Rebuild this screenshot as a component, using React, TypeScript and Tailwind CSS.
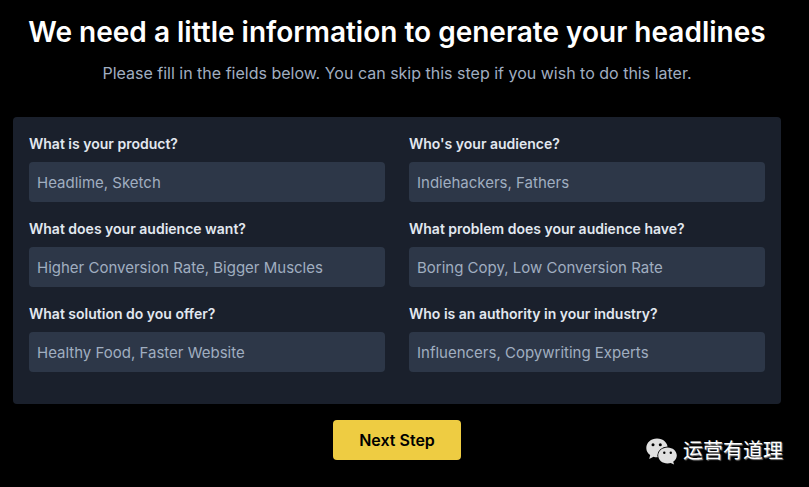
import React from 'react';

interface Field {
  id: string;
  label: string;
  placeholder: string;
}

const fields: Field[] = [
  { id: 'product', label: 'What is your product?', placeholder: 'Headlime, Sketch' },
  { id: 'audience', label: "Who's your audience?", placeholder: 'Indiehackers, Fathers' },
  { id: 'want', label: 'What does your audience want?', placeholder: 'Higher Conversion Rate, Bigger Muscles' },
  { id: 'problem', label: 'What problem does your audience have?', placeholder: 'Boring Copy, Low Conversion Rate' },
  { id: 'solution', label: 'What solution do you offer?', placeholder: 'Healthy Food, Faster Website' },
  { id: 'authority', label: 'Who is an authority in your industry?', placeholder: 'Influencers, Copywriting Experts' },
];

const TextField = ({ id, label, placeholder }: Field) => (
  <div className="mb-4">
    <label htmlFor={id} className="mb-2 block text-sm leading-[21px] font-semibold text-[#e2e8f0]">
      {label}
    </label>
    <input
      id={id}
      type="text"
      placeholder={placeholder}
      className="block h-10 w-full rounded bg-[#2d3748] px-2 text-[15px] text-white outline-none placeholder:text-[#a0aec0]"
    />
  </div>
);

const WechatIcon = () => (
  <svg className="h-[27px] w-8" viewBox="0 0 32 27" aria-hidden="true">
    {/* large bubble */}
    <path
      fill="#e0e0e0"
      d="M11 .5C5.100.5.300 4.600.300 9.900c0 3 1.500 5.500 3.900 7.200L3.200 21l4.300-2.300c1.200.4 2.300.5 3.500.5 6 0 10.700-4.100 10.700-9.300S17.100.5 11 .5Z"
    />
    <circle cx="7" cy="6.8" r="1.5" fill="#000" />
    <circle cx="14.300" cy="6.8" r="1.5" fill="#000" />
    {/* small bubble, cut out of the large one */}
    <path
      fill="#e0e0e0"
      stroke="#000"
      strokeWidth="1.8"
      paintOrder="stroke"
      d="M21.500 9.500c-5.200 0-9.300 3.600-9.300 8s4.100 8 9.300 8c1.200 0 2.200-.2 3.200-.5l3.400 1.600-.9-2.900c2.200-1.500 3.600-3.700 3.600-6.200 0-4.400-4.100-8-9.300-8Z"
    />
    <circle cx="18.300" cy="14.800" r="1.2" fill="#000" />
    <circle cx="24.800" cy="14.800" r="1.2" fill="#000" />
  </svg>
);

export default function App() {
  return (
    <div className="relative min-h-screen bg-black pt-3 pr-7 pb-6 pl-[13px] font-['Inter','Noto_Sans_CJK_SC',sans-serif]">
      <main className="mx-auto max-w-3xl">
        <header className="mb-8 text-center">
          <h1 className="text-[28px] leading-10 font-semibold text-white">
            We need a little information to generate your headlines
          </h1>
          <p className="mt-[9px] text-base text-[#a0aec0]">
            Please fill in the fields below. You can skip this step if you wish to do this later.
          </p>
        </header>

        <form onSubmit={e => e.preventDefault()}>
          <div className="grid grid-cols-2 gap-x-6 rounded bg-[#1a202c] p-4">
            {fields.map(field => (
              <TextField key={field.id} {...field} />
            ))}
          </div>
          <button
            type="submit"
            className="mx-auto mt-4 block h-10 w-32 rounded bg-[#eecc42] text-base font-semibold text-black"
          >
            Next Step
          </button>
        </form>
      </main>

      {/* Watermark */}
      <div className="absolute right-[26px] bottom-5 flex items-center gap-[5px] text-white">
        <WechatIcon />
        <span className="text-xl leading-8 [text-shadow:1px_1px_1px_#888]">运营有道理</span>
      </div>
    </div>
  );
}
